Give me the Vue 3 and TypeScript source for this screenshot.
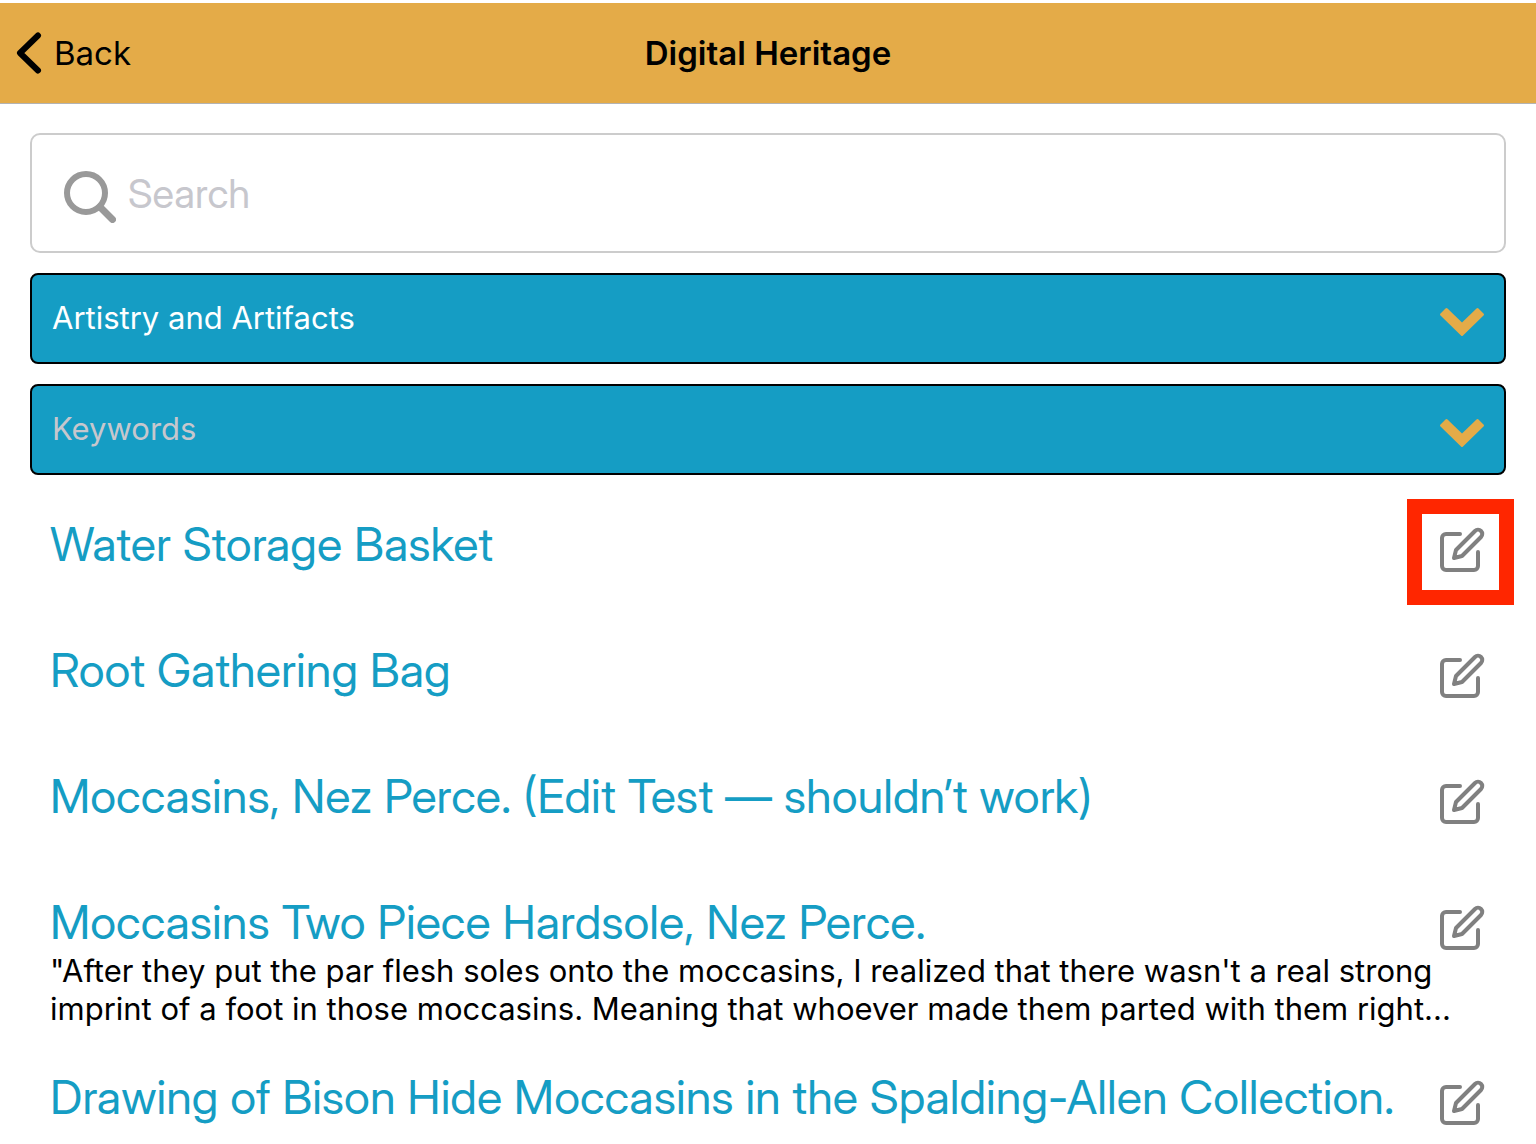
<script setup lang="ts">
import { ref } from 'vue'

interface HeritageItem {
  title: string
  description?: string
  highlighted?: boolean
}

const query = ref('')
const category = ref('Artistry and Artifacts')
const keyword = ref('')

const items: HeritageItem[] = [
  { title: 'Water Storage Basket', highlighted: true },
  { title: 'Root Gathering Bag' },
  { title: 'Moccasins, Nez Perce. (Edit Test — shouldn’t work)' },
  {
    title: 'Moccasins Two Piece Hardsole, Nez Perce.',
    description:
      '"After they put the par flesh soles onto the moccasins, I realized that there wasn\'t a real strong imprint of a foot in those moccasins. Meaning that whoever made them parted with them right...',
  },
  { title: 'Drawing of Bison Hide Moccasins in the Spalding-Allen Collection.' },
]
</script>

<template>
  <div class="page">
    <header class="bar">
      <button class="back" type="button">
        <svg class="back-icon" viewBox="0 0 26 42" aria-hidden="true">
          <path d="M22 3.500 4 21l18 17.500" fill="none" stroke="#000" stroke-width="6" stroke-linecap="round" stroke-linejoin="round" />
        </svg>
        <span>Back</span>
      </button>
      <h1 class="heading">Digital Heritage</h1>
    </header>

    <main class="content">
      <form class="filters" @submit.prevent>
        <label class="search">
          <svg class="search-icon" viewBox="0 0 54 54" aria-hidden="true">
            <g fill="none" stroke="#999" stroke-linecap="round">
              <circle cx="24" cy="24" r="19" stroke-width="6" />
              <path d="M38 38 50.500 50.500" stroke-width="7" />
            </g>
          </svg>
          <input v-model="query" class="search-input" type="text" placeholder="Search" aria-label="Search" />
        </label>

        <div class="picker">
          <select v-model="category" class="select" aria-label="Category">
            <option>Artistry and Artifacts</option>
          </select>
          <svg class="chevron" viewBox="0 0 44 28" aria-hidden="true">
            <path d="M.500 5.500 5.500.500q1-1 2 0L22 14.500 36.500.500q1-1 2 0l5 5q1 1 0 2L23 27.500q-1 1-2 0L.500 7.500q-1-1 0-2z" fill="#e4ab48" />
          </svg>
        </div>

        <div class="picker">
          <select v-model="keyword" class="select select-empty" aria-label="Keywords">
            <option value="">Keywords</option>
          </select>
          <svg class="chevron" viewBox="0 0 44 28" aria-hidden="true">
            <path d="M.500 5.500 5.500.500q1-1 2 0L22 14.500 36.500.500q1-1 2 0l5 5q1 1 0 2L23 27.500q-1 1-2 0L.500 7.500q-1-1 0-2z" fill="#e4ab48" />
          </svg>
        </div>
      </form>

      <ul class="list">
        <li v-for="item in items" :key="item.title" class="row">
          <div class="text">
            <a class="title" href="#">{{ item.title }}</a>
            <p v-if="item.description" class="description">{{ item.description }}</p>
          </div>
          <button class="edit" :class="{ highlighted: item.highlighted }" type="button" :aria-label="'Edit ' + item.title">
            <svg viewBox="0 0 24 24" fill="none" stroke="#808080" stroke-width="2" stroke-linecap="round" stroke-linejoin="round" aria-hidden="true">
              <path d="M11 4H4a2 2 0 0 0-2 2v14a2 2 0 0 0 2 2h14a2 2 0 0 0 2-2v-7" />
              <path d="M18.500 2.500a2.121 2.121 0 0 1 3 3L12 15l-4 1 1-4 9.500-9.500z" />
            </svg>
          </button>
        </li>
      </ul>
    </main>
  </div>
</template>

<style>
body {
  background: #fff;
}
</style>

<style scoped>
.page {
  padding-top: 3px;
  font-family: Inter, "Noto Sans", sans-serif;
  color: #000;
}
.bar {
  display: grid;
  grid-template-columns: 1fr auto 1fr;
  align-items: center;
  height: 100px;
  padding: 0 16px;
  background: #e4ab48;
  border-bottom: 1px solid #b3b3b3;
}
.back {
  display: flex;
  align-items: center;
  justify-self: start;
  gap: 12px;
  padding: 0;
  border: 0;
  background: none;
  color: inherit;
  font: inherit;
  font-size: 33px;
  line-height: 42px;
}
.back-icon {
  width: 26px;
  height: 42px;
}
.heading {
  margin: 0;
  font-size: 33px;
  font-weight: 600;
  line-height: 42px;
}
.content {
  padding: 29px 30px 0;
}
.filters {
  display: grid;
  gap: 20px;
}
.search {
  display: flex;
  align-items: center;
  gap: 12px;
  height: 120px;
  padding: 0 30px;
  box-sizing: border-box;
  border: 2px solid #ccc;
  border-radius: 10px;
}
.search-icon {
  flex: none;
  width: 54px;
  height: 54px;
  margin-top: 6px;
}
.search-input {
  flex: 1;
  min-width: 0;
  padding: 0;
  border: 0;
  outline: 0;
  background: none;
  font-family: "Inter Display", Inter, sans-serif;
  font-size: 40px;
}
.search-input::placeholder {
  color: #c7c7cd;
}
.picker {
  display: grid;
  align-items: center;
}
.select {
  grid-area: 1 / 1;
  width: 100%;
  height: 91px;
  padding: 0 20px 2px;
  border: 2px solid #000;
  border-radius: 8px;
  appearance: none;
  background: #159dc4;
  color: #fff;
  font: inherit;
  font-size: 31px;
}
.select-empty {
  color: #c7c7cd;
}
.chevron {
  grid-area: 1 / 1;
  justify-self: end;
  width: 44px;
  height: 28px;
  margin: 6px 22px 0 0;
  pointer-events: none;
}
.list {
  display: grid;
  grid-template-columns: minmax(0, 1fr);
  gap: 42px;
  margin: 42px 0 0;
  padding: 0 20px;
  list-style: none;
}
.row {
  display: flex;
  align-items: flex-start;
  min-height: 84px;
}
.row:last-child {
  min-height: 0;
}
.text {
  flex: 1;
  min-width: 0;
}
.title {
  display: block;
  padding-bottom: 4px;
  color: #159dc4;
  font-family: "Inter Display", Inter, sans-serif;
  font-size: 47px;
  line-height: 53px;
  text-decoration: none;
  white-space: nowrap;
}
.description {
  margin: 0 -24px 0 0;
  font-size: 31px;
  line-height: 38px;
}
.edit {
  position: relative;
  flex: none;
  width: 48px;
  height: 48px;
  margin-top: 9px;
  padding: 0;
  border: 0;
  background: none;
}
.edit svg {
  display: block;
}
.highlighted::after {
  content: "";
  position: absolute;
  inset: -27px -28px -31px -31px;
  border: 15px solid #ff2600;
}
</style>
